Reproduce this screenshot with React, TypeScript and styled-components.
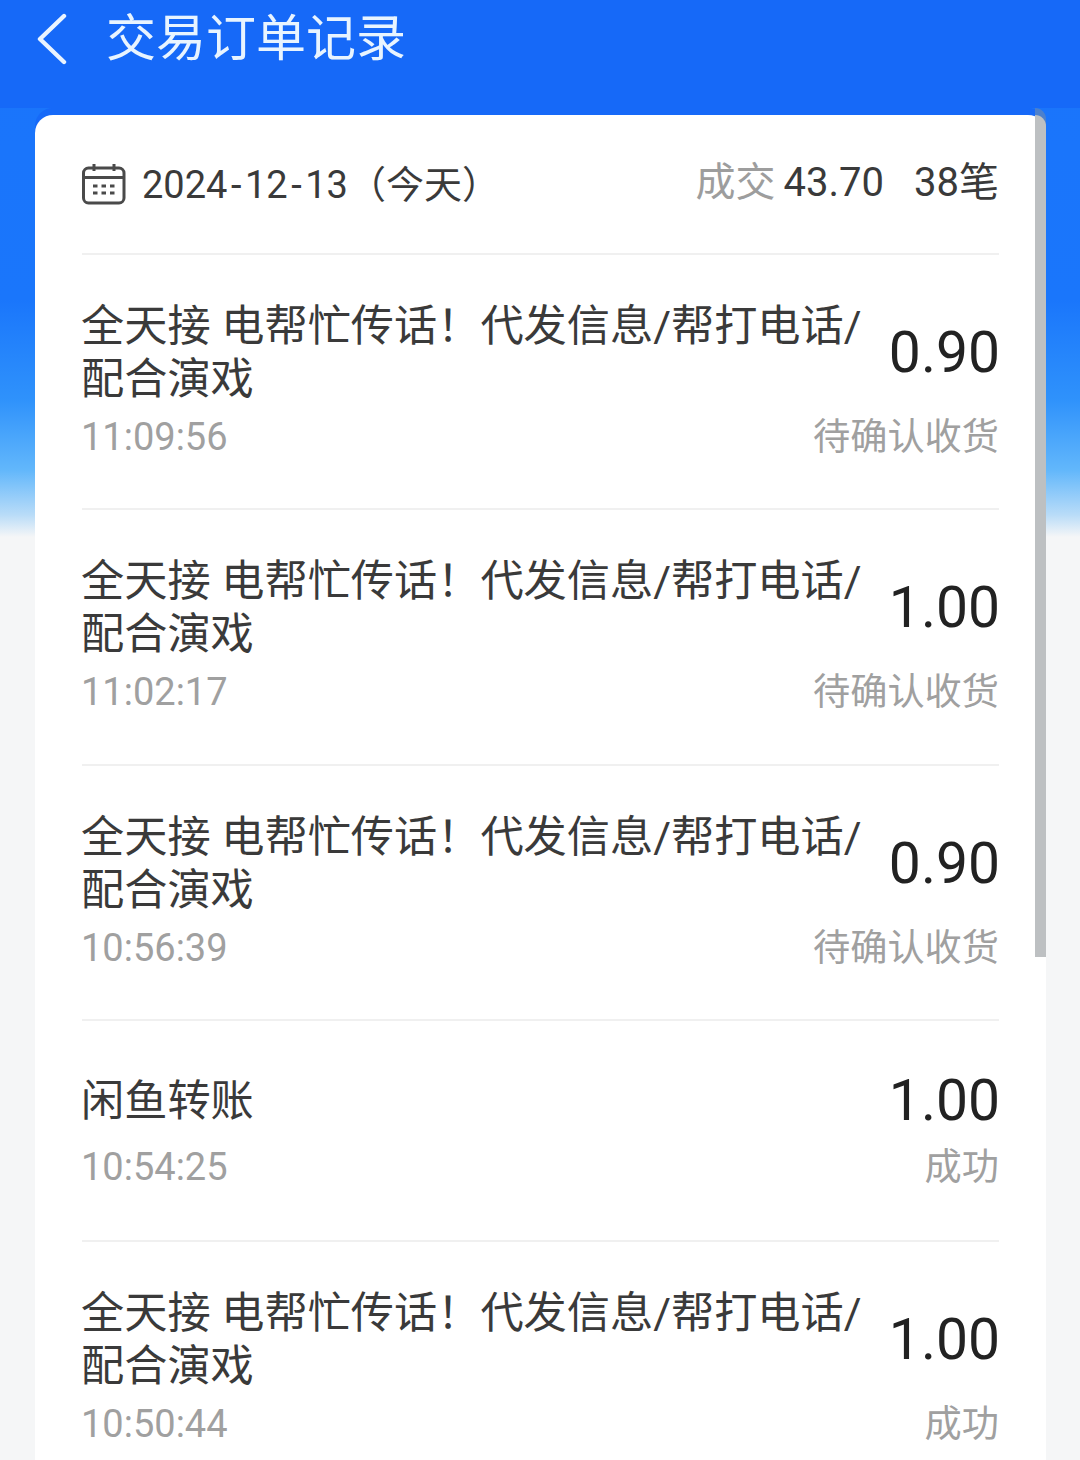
import React from 'react';
import styled, { createGlobalStyle } from 'styled-components';

const GlobalStyle = createGlobalStyle`
    html, body {
        margin: 0;
        padding: 0;
    }
    body {
        font-family: 'Roboto', 'Noto Sans CJK SC', sans-serif;
    }
`;

interface Order {
    title: string;
    time: string;
    amount: string;
    status: string;
    height: number;
}

const PROXY_TITLE = '全天接 电帮忙传话！代发信息/帮打电话/配合演戏';

const orders: Order[] = [
    { title: PROXY_TITLE, time: '11:09:56', amount: '0.90', status: '待确认收货', height: 255 },
    { title: PROXY_TITLE, time: '11:02:17', amount: '1.00', status: '待确认收货', height: 256 },
    { title: PROXY_TITLE, time: '10:56:39', amount: '0.90', status: '待确认收货', height: 255 },
    { title: '闲鱼转账', time: '10:54:25', amount: '1.00', status: '成功', height: 221 },
    { title: PROXY_TITLE, time: '10:50:44', amount: '1.00', status: '成功', height: 255 },
];

const CalendarIcon = () => (
    <svg width="44" height="42" viewBox="0 0 44 42" fill="none" stroke="#4a4a4a" strokeWidth="3">
        <rect x="1.5" y="5" width="40.5" height="35" rx="5" />
        <path d="M2 14.5h40M12 1v7M32 1v7" />
        <path d="M11 23h4.5M19.5 23h4.5M28 23h4.5M11 30h4.5M19.5 30h4.5M28 30h4.5" strokeWidth="3" />
    </svg>
);

const App: React.FC = () => (
    <Page>
        <GlobalStyle />
        <Header>
            <BackIcon width="34" height="52" viewBox="0 0 34 52" fill="none">
                <path d="M29 3 5 26l24 23" stroke="#eaf4ff" strokeWidth="4.4" strokeLinecap="round" strokeLinejoin="round" />
            </BackIcon>
            <Title>交易订单记录</Title>
        </Header>
        <Card>
            <ScrollThumb />
            <Summary>
                <DateGroup>
                    <CalendarIcon />
                    <DateText>
                        2024<Dash>-</Dash>12<Dash>-</Dash>13（今天）
                    </DateText>
                </DateGroup>
                <Totals>
                    <TotalsLabel>成交</TotalsLabel>
                    <span>43.70</span>
                    <TotalsCount>38笔</TotalsCount>
                </Totals>
            </Summary>
            {orders.map((order) => (
                <OrderRow key={order.time} $height={order.height}>
                    <OrderTop>
                        <OrderTitle>{order.title}</OrderTitle>
                        <Amount>{order.amount}</Amount>
                    </OrderTop>
                    <OrderBottom>
                        <OrderTime>{order.time}</OrderTime>
                        <Status>{order.status}</Status>
                    </OrderBottom>
                </OrderRow>
            ))}
        </Card>
    </Page>
);

const Page = styled.div`
    height: 1460px;
    overflow: hidden;
    background-color: #f5f6f7;
    background-image: linear-gradient(
        180deg,
        #1a74fb 0,
        #1a76fb 300px,
        #2f92fb 400px,
        #62b7fb 470px,
        #b9dcf8 515px,
        #f5f6f7 537px
    );
    background-repeat: no-repeat;
    background-size: 100% 540px;
`;

const Header = styled.header`
    display: flex;
    align-items: center;
    height: 108px;
    padding: 0 0 30px 35px;
    box-sizing: border-box;
    background: #1669f8;
`;

const BackIcon = styled.svg`
    flex: none;
`;

const Title = styled.h1`
    margin: 0 0 0 37px;
    font-size: 50px;
    font-weight: 400;
    line-height: 60px;
    color: #e8f4ff;
`;

const Card = styled.main`
    position: relative;
    box-sizing: border-box;
    width: 1011px;
    margin: 7px 0 0 35px;
    padding: 0 47px;
    background: #fff;
    border-radius: 18px 18px 0 0;
    box-shadow: 0 -7px 0 #1669f8;
`;

const ScrollThumb = styled.div`
    position: absolute;
    top: 0;
    right: 0;
    width: 11px;
    height: 842px;
    background: #bdc0c2;
    border-top-right-radius: 14px;
    box-shadow: 0 -7px 0 #4c80cc;
`;

const Summary = styled.section`
    display: flex;
    justify-content: space-between;
    align-items: center;
    height: 140px;
    box-sizing: border-box;
    border-bottom: 2px solid #f0f0f0;
`;

const DateGroup = styled.div`
    display: flex;
    align-items: center;
`;

const DateText = styled.span`
    margin-left: 16px;
    padding-bottom: 6px;
    font-size: 38px;
    color: #3a3a3a;
`;

const Dash = styled.span`
    margin: 0 3.5px;
`;

const Totals = styled.div`
    display: flex;
    align-items: baseline;
    padding-bottom: 10px;
    font-size: 40px;
    color: #3a3a3a;
`;

const TotalsLabel = styled.span`
    margin-right: 8px;
    color: #9d9d9d;
`;

const TotalsCount = styled.span`
    margin-left: 30px;
`;

const OrderRow = styled.article<{ $height: number }>`
    box-sizing: border-box;
    height: ${(props) => props.$height}px;
    padding-top: 45px;
    border-bottom: 2px solid #f0f0f0;
`;

const OrderTop = styled.div`
    display: flex;
    justify-content: space-between;
    align-items: center;
    min-height: 70px;
`;

const OrderTitle = styled.div`
    width: 786px;
    margin-left: -1px;
    font-size: 43.2px;
    line-height: 53px;
    color: #3a3a3a;
`;

const Amount = styled.div`
    margin-right: -1px;
    font-size: 57px;
    line-height: 70px;
    color: #222;
`;

const OrderBottom = styled.div`
    display: flex;
    justify-content: space-between;
    align-items: center;
    margin-top: 5px;
`;

const OrderTime = styled.div`
    margin-left: -1px;
    font-size: 38px;
    line-height: 52px;
    color: #a0a0a0;
`;

const Status = styled.div`
    font-size: 37.2px;
    line-height: 52px;
    color: #a0a0a0;
`;

export default App;
